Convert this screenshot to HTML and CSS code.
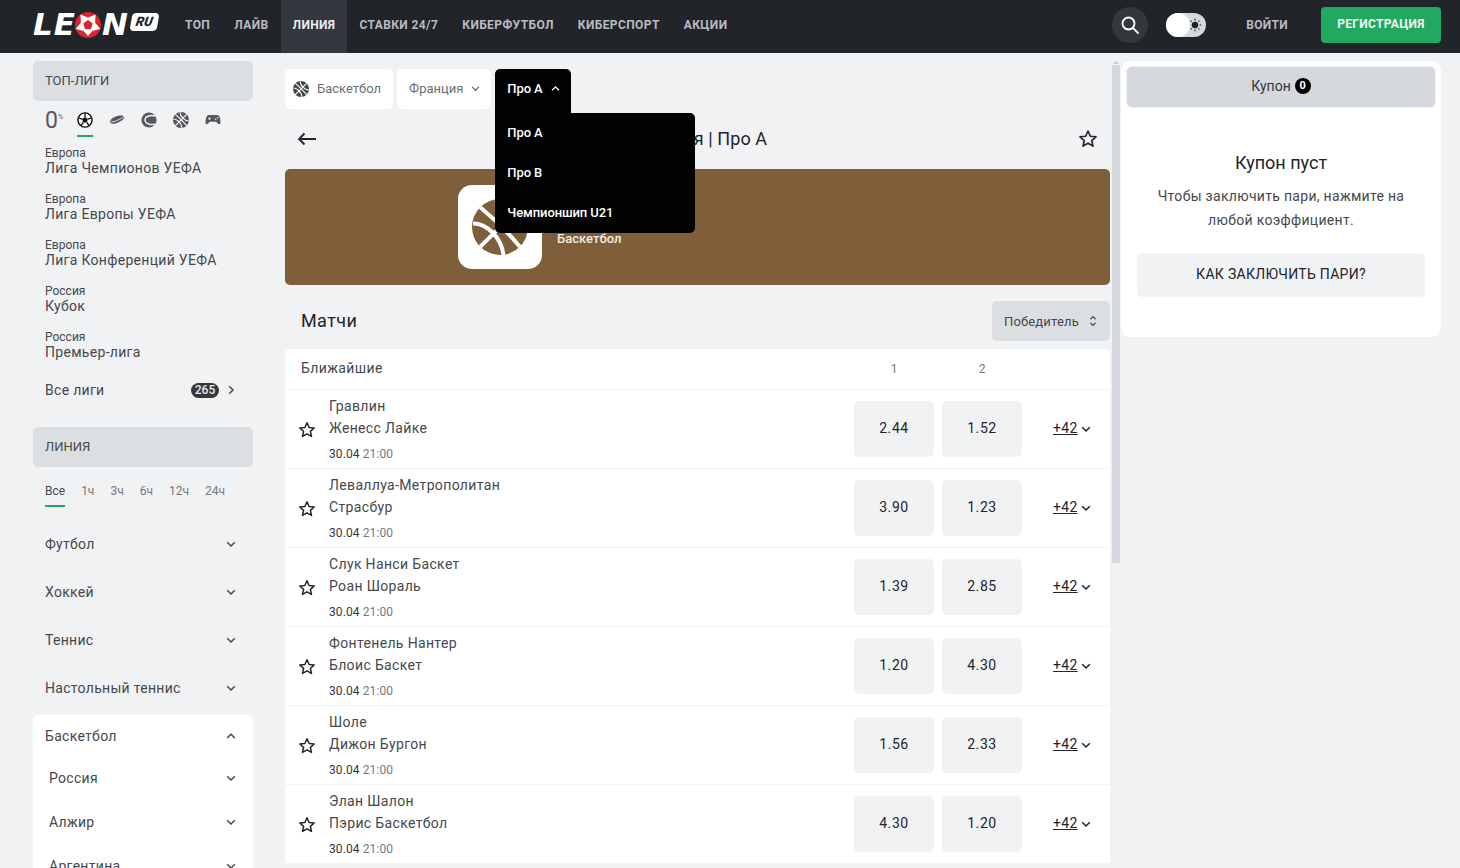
FILE: index.html
```html
<!DOCTYPE html>
<html lang="ru">
<head>
	<meta charset="UTF-8">
	<title>Леон - Франция | Про А</title>
	<link rel="stylesheet" href="styles.css">
</head>
<body>
	<svg class="defs" width="0" height="0">
		<symbol id="ball" viewBox="0 0 24 24">
			<circle cx="12" cy="12" r="12" fill="currentColor"/>
			<path d="M3.500 3.500C9 8 16 15 20.500 20.500M20.500 3.500L3.500 20.500M.5 10.500C6 10.500 12.500 16 13.500 24M10.500 .5C11 7 17 13 23.500 13.500" fill="none" stroke="#fff" stroke-width="1.700"/>
		</symbol>
		<symbol id="star" viewBox="0 0 18 18">
			<path d="M9 1.800l2.100 4.700 5.100.5-3.800 3.400 1.100 5-4.500-2.600-4.500 2.600 1.100-5L1.800 7l5.100-.5z" fill="none" stroke="currentColor" stroke-width="1.500" stroke-linejoin="round"/>
		</symbol>
		<symbol id="down" viewBox="0 0 10 10">
			<path d="M1.200 3.200L5 7l3.800-3.800" fill="none" stroke="currentColor" stroke-width="1.500"/>
		</symbol>
		<symbol id="up" viewBox="0 0 10 10">
			<path d="M1.200 7L5 3.200 8.800 7" fill="none" stroke="currentColor" stroke-width="1.500"/>
		</symbol>
	</svg>

	<header class="topbar">
		<div class="logo">
			<span class="logo_word">LE</span>
			<svg class="logo_ball" viewBox="0 0 26 26" width="26" height="26">
				<circle cx="13" cy="13" r="13" fill="#d9232e"/>
				<polygon points="13,5.500 20.600,2.500 20.100,10.700 25.400,17 17.400,19.100 13,24 8.600,19.100 .6,17 5.900,10.700 5.400,2.500" fill="#fff"/>
				<polygon points="13,8 17.800,11.500 15.900,17 10.100,17 8.200,11.500" fill="#d9232e"/>
			</svg>
			<span class="logo_word">N</span>
			<span class="logo_ru">RU</span>
		</div>
		<nav class="topnav">
			<a>ТОП</a>
			<a>ЛАЙВ</a>
			<a class="active">ЛИНИЯ</a>
			<a>СТАВКИ 24/7</a>
			<a>КИБЕРФУТБОЛ</a>
			<a>КИБЕРСПОРТ</a>
			<a>АКЦИИ</a>
		</nav>
		<div class="topright">
			<span class="searchbtn">
				<svg viewBox="0 0 20 20" width="20" height="20"><circle cx="8.500" cy="8.500" r="6" fill="none" stroke="#fff" stroke-width="1.800"/><path d="M13 13l5.500 5.500" stroke="#fff" stroke-width="1.800"/></svg>
			</span>
			<span class="toggle">
				<span class="toggle_knob"></span>
				<svg viewBox="0 0 14 14" width="14" height="14"><circle cx="7" cy="7" r="3.200" fill="#1d2025"/><path d="M7 .8v1.600M7 11.600v1.600M.8 7h1.600M11.600 7h1.600M2.600 2.600l1.100 1.100M10.300 10.300l1.100 1.100M2.600 11.400l1.100-1.100M10.300 3.700l1.100-1.100" stroke="#1d2025" stroke-width="1.100"/></svg>
			</span>
			<a class="loginbtn">ВОЙТИ</a>
			<a class="regbtn">РЕГИСТРАЦИЯ</a>
		</div>
	</header>

	<div class="layout">
		<aside class="side">
			<div class="side_head">ТОП-ЛИГИ</div>
			<div class="sporttabs">
				<span class="zero">0<small>%</small></span>
				<span class="sporttab active">
					<svg viewBox="0 0 18 18" width="16" height="16"><circle cx="9" cy="9" r="8" fill="#fff" stroke="#111" stroke-width="1.600"/><path d="M9 5.500l3.300 2.400-1.300 3.900H7L5.700 7.900z" fill="#111"/><path d="M9 1v4.500M12.300 7.900l4.200-1.400M11 11.800l2.600 3.600M7 11.800l-2.600 3.600M5.700 7.900L1.500 6.500" stroke="#111" stroke-width="1.500"/></svg>
				</span>
				<span class="sporttab">
					<svg viewBox="0 0 18 18" width="16" height="16"><path d="M1 10.500c0-2 5-5.500 10.500-6.500 3-.5 5.500.3 5.500 1.800 0 2.500-4.500 5.500-10 7-3.500.8-6 .2-6-2.300z" fill="#55585e"/><path d="M1.500 10c1.500 1.500 4 1 7-.2s6-2.800 8-4.800" fill="none" stroke="#f1f2f4" stroke-width="1"/></svg>
				</span>
				<span class="sporttab">
					<svg viewBox="0 0 18 18" width="16" height="16"><circle cx="9" cy="9" r="8.500" fill="#55585e"/><path d="M16 4.500C11 3 4.500 4.500 4.500 9s6.500 6 11.500 4.500" fill="none" stroke="#f1f2f4" stroke-width="1.500"/></svg>
				</span>
				<span class="sporttab ball_grey">
					<svg width="16" height="16"><use href="#ball"/></svg>
				</span>
				<span class="sporttab">
					<svg viewBox="0 0 18 18" width="16" height="16"><path d="M4.500 3.500h9c2 0 3 1.500 3.500 4.500l.5 3.500c.2 2-1.800 3-3 1.500L12.500 11h-7l-2 2c-1.200 1.500-3.200.5-3-1.500L1 8c.5-3 1.500-4.500 3.500-4.500z" fill="#55585e"/><path d="M3.500 7.500h3M5 6v3" stroke="#f1f2f4" stroke-width="1"/><circle cx="12" cy="8.200" r=".9" fill="#f1f2f4"/><circle cx="14.200" cy="6.500" r=".9" fill="#f1f2f4"/></svg>
				</span>
			</div>
			<ul class="leagues">
				<li><span>Европа</span>Лига Чемпионов УЕФА</li>
				<li><span>Европа</span>Лига Европы УЕФА</li>
				<li><span>Европа</span>Лига Конференций УЕФА</li>
				<li><span>Россия</span>Кубок</li>
				<li><span>Россия</span>Премьер-лига</li>
			</ul>
			<div class="allleagues">
				<span>Все лиги</span>
				<b class="badge">265</b>
				<svg class="chev_r" viewBox="0 0 10 10" width="10" height="10"><path d="M3.200 1.200L7 5 3.200 8.800" fill="none" stroke="currentColor" stroke-width="1.500"/></svg>
			</div>
			<div class="side_head line_head">ЛИНИЯ</div>
			<div class="timetabs">
				<span class="active">Все</span>
				<span>1ч</span>
				<span>3ч</span>
				<span>6ч</span>
				<span>12ч</span>
				<span>24ч</span>
			</div>
			<div class="sport"><span>Футбол</span><svg class="chev"><use href="#down"/></svg></div>
			<div class="sport"><span>Хоккей</span><svg class="chev"><use href="#down"/></svg></div>
			<div class="sport"><span>Теннис</span><svg class="chev"><use href="#down"/></svg></div>
			<div class="sport"><span>Настольный теннис</span><svg class="chev"><use href="#down"/></svg></div>
			<div class="sportcard">
				<div class="sport"><span>Баскетбол</span><svg class="chev"><use href="#up"/></svg></div>
				<div class="country"><span>Россия</span><svg class="chev"><use href="#down"/></svg></div>
				<div class="country"><span>Алжир</span><svg class="chev"><use href="#down"/></svg></div>
				<div class="country"><span>Аргентина</span><svg class="chev"><use href="#down"/></svg></div>
			</div>
		</aside>

		<main class="content">
			<div class="crumbs">
				<span class="crumb">
					<svg class="ball_dark" width="16" height="16"><use href="#ball"/></svg>
					Баскетбол
				</span>
				<span class="crumb crumb_drop">Франция <svg class="chev_s"><use href="#down"/></svg></span>
				<span class="crumb crumb_drop crumb_open">
					Про А <svg class="chev_s"><use href="#up"/></svg>
					<div class="menu">
						<a>Про А</a>
						<a>Про B</a>
						<a>Чемпионшип U21</a>
					</div>
				</span>
			</div>
			<div class="titlebar">
				<svg viewBox="0 0 20 14" width="20" height="14"><path d="M19 7H2M7.500 1.500L2 7l5.500 5.500" fill="none" stroke="#212429" stroke-width="1.800"/></svg>
				<h1>Франция | Про А</h1>
				<svg class="title_star" width="20" height="20"><use href="#star"/></svg>
			</div>
			<div class="banner">
				<span class="banner_icon"><svg class="ball_brown" width="56" height="56"><use href="#ball"/></svg></span>
				<span class="banner_sport">Баскетбол</span>
			</div>
			<div class="matchhead">
				<h2>Матчи</h2>
				<span class="market">
					Победитель
					<svg viewBox="0 0 10 16" width="10" height="14"><path d="M2 6l3-3 3 3M2 10l3 3 3-3" fill="none" stroke="#45484d" stroke-width="1.300"/></svg>
				</span>
			</div>
			<div class="matches">
				<div class="tablehead">
					<span class="tablehead_name">Ближайшие</span>
					<span class="tablehead_col">1</span>
					<span class="tablehead_col">2</span>
				</div>
				<div class="match">
					<svg class="match_star" width="18" height="18"><use href="#star"/></svg>
					<div class="teams"><p>Гравлин</p><p>Женесс Лайке</p><time>30.04 <i>21:00</i></time></div>
					<a class="odd">2.44</a><a class="odd">1.52</a>
					<a class="more"><u>+42</u><svg class="chev"><use href="#down"/></svg></a>
				</div>
				<div class="match">
					<svg class="match_star" width="18" height="18"><use href="#star"/></svg>
					<div class="teams"><p>Леваллуа-Метрополитан</p><p>Страсбур</p><time>30.04 <i>21:00</i></time></div>
					<a class="odd">3.90</a><a class="odd">1.23</a>
					<a class="more"><u>+42</u><svg class="chev"><use href="#down"/></svg></a>
				</div>
				<div class="match">
					<svg class="match_star" width="18" height="18"><use href="#star"/></svg>
					<div class="teams"><p>Слук Нанси Баскет</p><p>Роан Шораль</p><time>30.04 <i>21:00</i></time></div>
					<a class="odd">1.39</a><a class="odd">2.85</a>
					<a class="more"><u>+42</u><svg class="chev"><use href="#down"/></svg></a>
				</div>
				<div class="match">
					<svg class="match_star" width="18" height="18"><use href="#star"/></svg>
					<div class="teams"><p>Фонтенель Нантер</p><p>Блоис Баскет</p><time>30.04 <i>21:00</i></time></div>
					<a class="odd">1.20</a><a class="odd">4.30</a>
					<a class="more"><u>+42</u><svg class="chev"><use href="#down"/></svg></a>
				</div>
				<div class="match">
					<svg class="match_star" width="18" height="18"><use href="#star"/></svg>
					<div class="teams"><p>Шоле</p><p>Дижон Бургон</p><time>30.04 <i>21:00</i></time></div>
					<a class="odd">1.56</a><a class="odd">2.33</a>
					<a class="more"><u>+42</u><svg class="chev"><use href="#down"/></svg></a>
				</div>
				<div class="match">
					<svg class="match_star" width="18" height="18"><use href="#star"/></svg>
					<div class="teams"><p>Элан Шалон</p><p>Пэрис Баскетбол</p><time>30.04 <i>21:00</i></time></div>
					<a class="odd">4.30</a><a class="odd">1.20</a>
					<a class="more"><u>+42</u><svg class="chev"><use href="#down"/></svg></a>
				</div>
			</div>
		</main>

		<div class="scroll">
			<span class="scroll_arrow"></span>
			<span class="scroll_thumb"></span>
		</div>

		<aside class="coupon">
			<div class="coupon_tab">Купон <b>0</b></div>
			<div class="coupon_body">
				<h3>Купон пуст</h3>
				<p>Чтобы заключить пари, нажмите на любой коэффициент.</p>
				<a class="howto">КАК ЗАКЛЮЧИТЬ ПАРИ?</a>
			</div>
		</aside>
	</div>
</body>
</html>
```

FILE: styles.css
```css
* {
	box-sizing: border-box;
}
html, body {
	height: 100%;
}
body {
	margin: 0;
	overflow: hidden;
	background: #f1f2f4;
	color: #45484d;
	font-family: Roboto, "Liberation Sans", sans-serif;
	font-size: 14px;
}
p, h1, h2, h3, ul {
	margin: 0;
	padding: 0;
}
.defs {
	position: absolute;
}

/* top bar */
.topbar {
	display: flex;
	align-items: center;
	height: 53px;
	padding: 0 19px 0 33px;
	background: #212429;
}
.logo {
	display: flex;
	align-items: center;
	align-self: flex-start;
	width: 140px;
	height: 50px;
	color: #fff;
}
.logo_word {
	margin-bottom: 2px;
	font-family: "DejaVu Sans", sans-serif;
	font-size: 31px;
	font-weight: 700;
	font-style: italic;
	line-height: 28px;
	letter-spacing: 1px;
}
.logo_ball {
	margin: 0 1px 0 -1px;
	flex: none;
}
.logo_ru {
	align-self: flex-start;
	margin: 13px 0 0 2px;
	padding: 0 5px;
	height: 18px;
	border-radius: 4px;
	background: #fff;
	color: #212429;
	font-size: 13px;
	font-weight: 900;
	font-style: italic;
	line-height: 18px;
	transform: skewX(-10deg);
}
.topnav {
	display: flex;
	height: 53px;
}
.topnav a {
	padding: 0 12px;
	color: #b9bcc1;
	font-size: 12px;
	font-weight: 700;
	line-height: 51px;
	letter-spacing: .4px;
}
.topnav a.active {
	background: #33373e;
	color: #eceef0;
}
.topright {
	display: flex;
	align-items: center;
	margin-left: auto;
	padding-bottom: 3px;
}
.searchbtn {
	display: flex;
	align-items: center;
	justify-content: center;
	width: 36px;
	height: 36px;
	border-radius: 50%;
	background: #33373e;
}
.toggle {
	display: flex;
	align-items: center;
	justify-content: flex-end;
	position: relative;
	width: 40px;
	height: 24px;
	margin-left: 18px;
	padding-right: 4px;
	border-radius: 12px;
	background: #d5d8dc;
}
.toggle_knob {
	position: absolute;
	left: 0;
	top: 0;
	width: 24px;
	height: 24px;
	border-radius: 50%;
	background: #fff;
}
.loginbtn {
	margin-left: 40px;
	color: #b9bcc1;
	font-size: 12px;
	font-weight: 700;
	letter-spacing: .3px;
}
.regbtn {
	width: 120px;
	height: 36px;
	margin-left: 33px;
	border-radius: 4px;
	background: #21a861;
	color: #f3f5f4;
	font-size: 12px;
	font-weight: 700;
	line-height: 35px;
	text-align: center;
	letter-spacing: .3px;
}

/* columns */
.layout {
	display: flex;
	height: 815px;
	overflow: hidden;
	padding: 8px 19px 0 33px;
}
.side {
	flex: none;
	width: 220px;
}
.content {
	flex: none;
	width: 825px;
	margin-left: 32px;
}
.scroll {
	flex: none;
	width: 8px;
	margin-left: 2px;
}
.scroll_arrow {
	display: block;
	width: 0;
	margin: 0 auto 1px;
	border: 3px solid transparent;
	border-top: 0;
	border-bottom: 3px solid #c9ccd1;
}
.scroll_thumb {
	display: block;
	height: 498px;
	background: #d5d8dd;
}

/* left column */
.side_head {
	height: 40px;
	padding-left: 12px;
	border-radius: 5px;
	background: #dcdfe2;
	font-size: 13px;
	line-height: 39px;
}
.line_head {
	margin-top: 17px;
}
.sporttabs {
	display: flex;
	height: 31px;
	margin-top: 8px;
	padding-left: 12px;
}
.zero {
	width: 32px;
	color: #55585e;
	font-size: 23px;
	line-height: 24px;
}
.zero small {
	font-size: 7px;
	line-height: 0;
	vertical-align: 9px;
}
.sporttab {
	display: block;
	width: 16px;
	height: 25px;
	margin: 3px 16px 0 0;
	color: #55585e;
}
.sporttab svg {
	display: block;
}
.sporttab.active {
	border-bottom: 2px solid #21a861;
}
.ball_grey {
	color: #55585e;
}
.leagues {
	list-style: none;
	margin-top: 6px;
}
.leagues li {
	height: 46px;
	padding-left: 12px;
	font-size: 14px;
	line-height: 16px;
	letter-spacing: .3px;
}
.leagues span {
	display: block;
	font-size: 12px;
	line-height: 14px;
	letter-spacing: 0;
}
.allleagues {
	display: flex;
	align-items: center;
	height: 40px;
	margin-top: -6px;
	padding: 0 17px 0 12px;
	letter-spacing: .3px;
}
.allleagues span {
	flex: 1;
}
.badge {
	width: 28px;
	height: 15px;
	border-radius: 8px;
	background: #33373e;
	color: #e9eaec;
	font-size: 12px;
	font-weight: 500;
	line-height: 15px;
	text-align: center;
	letter-spacing: 0;
}
.chev_r {
	margin-left: 7px;
}
.timetabs {
	display: flex;
	height: 37px;
	margin-top: 16px;
	padding-left: 12px;
	color: #75787d;
	font-size: 12px;
	line-height: 16px;
}
.timetabs span {
	height: 24px;
	margin-right: 16px;
	border-bottom: 2px solid transparent;
}
.timetabs .active {
	color: #45484d;
	border-bottom-color: #21a861;
}
.sport, .country {
	display: flex;
	align-items: center;
	justify-content: space-between;
	height: 48px;
	padding: 0 17px 0 12px;
	letter-spacing: .3px;
}
.country {
	height: 44px;
	padding-left: 16px;
}
.chev {
	width: 10px;
	height: 10px;
	flex: none;
}
.sportcard {
	margin-top: 3px;
	border-radius: 5px 5px 0 0;
	background: #fff;
	padding-bottom: 20px;
}
.sportcard .sport {
	height: 41px;
}

/* breadcrumbs */
.crumbs {
	display: flex;
	gap: 4px;
	margin-top: 8px;
}
.crumb {
	display: flex;
	align-items: center;
	gap: 8px;
	position: relative;
	height: 40px;
	padding: 0 12px 1px;
	border-radius: 5px;
	background: #fff;
	color: #6b6e73;
	font-size: 13px;
	white-space: nowrap;
}
.crumb:first-child {
	padding: 0 12px 1px 8px;
}
.crumb_drop {
	padding-right: 11px;
}
.crumb_open {
	background: #020203;
	color: #fff;
	font-weight: 500;
	letter-spacing: -.1px;
	border-radius: 5px 5px 0 0;
}
.crumb_open::after {
	content: "";
	position: absolute;
	left: 0;
	right: 0;
	top: 40px;
	height: 4px;
	background: #020203;
}
.chev_s {
	width: 9px;
	height: 9px;
}
.ball_dark {
	color: #45484d;
}
.menu {
	position: absolute;
	left: 0;
	top: 44px;
	z-index: 5;
	width: 200px;
	border-radius: 0 5px 5px 5px;
	background: #020203;
}
.menu a {
	display: block;
	height: 40px;
	padding-left: 12px;
	font-size: 13px;
	font-weight: 500;
	line-height: 40px;
}

/* title and banner */
.titlebar {
	display: flex;
	align-items: center;
	justify-content: space-between;
	height: 60px;
	padding: 0 12px;
}
.titlebar h1 {
	margin-bottom: 2px;
	color: #212429;
	font-size: 18px;
	font-weight: 400;
	letter-spacing: .1px;
}
.title_star {
	color: #212429;
}
.banner {
	display: flex;
	align-items: center;
	height: 116px;
	padding-left: 173px;
	border-radius: 5px;
	background: #7f5f3a;
	color: #fff;
}
.banner_icon {
	display: flex;
	align-items: center;
	justify-content: center;
	width: 84px;
	height: 84px;
	border-radius: 14px;
	background: #fff;
}
.ball_brown {
	color: #7f5f3a;
}
.banner_sport {
	margin: 23px 0 0 15px;
	color: #f0ebe4;
	font-size: 13px;
	font-weight: 500;
}

/* matches */
.matchhead {
	display: flex;
	align-items: flex-end;
	justify-content: space-between;
	height: 64px;
	padding: 0 0 8px 16px;
}
.matchhead h2 {
	color: #212429;
	font-size: 18px;
	font-weight: 400;
	line-height: 40px;
	letter-spacing: .4px;
}
.market {
	display: flex;
	align-items: center;
	justify-content: space-between;
	width: 118px;
	height: 40px;
	padding: 0 12px;
	border-radius: 5px;
	background: #dcdfe2;
	font-size: 13px;
	letter-spacing: .15px;
}
.matches {
	display: flex;
	flex-direction: column;
	gap: 1px;
}
.tablehead {
	display: flex;
	align-items: center;
	height: 40px;
	padding-right: 88px;
	border-radius: 5px 5px 0 0;
	background: #fff;
}
.tablehead_name {
	flex: 1;
	padding: 0 0 2px 16px;
	letter-spacing: .4px;
}
.tablehead_col {
	width: 80px;
	margin-right: 8px;
	color: #75787d;
	font-size: 12px;
	text-align: center;
}
.tablehead_col:last-child {
	margin-right: 0;
}
.match {
	display: flex;
	align-items: center;
	flex: none;
	height: 78px;
	background: #fff;
}
.match_star {
	flex: none;
	margin: 2px 0 0 13px;
	color: #212429;
}
.teams {
	flex: 1;
	padding: 0 0 2px 13px;
	letter-spacing: .35px;
}
.teams p {
	line-height: 22px;
}
.teams time {
	display: block;
	margin-top: 7px;
	color: #33373e;
	font-size: 12px;
	line-height: 16px;
	letter-spacing: .1px;
}
.teams i {
	color: #75787d;
	font-style: normal;
}
.odd {
	width: 80px;
	height: 56px;
	margin-right: 8px;
	border-radius: 5px;
	background: #f1f2f4;
	color: #212429;
	line-height: 55px;
	text-align: center;
	letter-spacing: .6px;
}
.more {
	display: flex;
	align-items: center;
	gap: 3px;
	width: 80px;
	padding: 0 0 3px 23px;
	color: #212429;
	letter-spacing: .3px;
}
.more .chev {
	margin-top: 2px;
}

/* coupon */
.coupon {
	flex: none;
	width: 320px;
	height: 276px;
	margin-left: 1px;
	padding: 5px;
	border-radius: 10px;
	background: #fff;
}
.coupon_tab {
	display: flex;
	align-items: center;
	justify-content: center;
	gap: 4px;
	height: 42px;
	padding-bottom: 2px;
	border: 1px solid #eef0f2;
	border-radius: 6px;
	background: #d5d8dc;
	color: #33373e;
}
.coupon_tab b {
	width: 16px;
	height: 16px;
	border-radius: 50%;
	background: #020203;
	color: #fff;
	font-size: 11px;
	font-weight: 700;
	line-height: 16px;
	text-align: center;
}
.coupon_body {
	padding: 0 11px;
	text-align: center;
}
.coupon_body h3 {
	margin-top: 44px;
	color: #212429;
	font-size: 18px;
	font-weight: 400;
	line-height: 22px;
}
.coupon_body p {
	margin: 10px 10px 0;
	line-height: 24px;
	letter-spacing: .3px;
}
.howto {
	display: block;
	height: 44px;
	margin-top: 21px;
	border-radius: 5px;
	background: #f1f2f4;
	color: #212429;
	line-height: 43px;
	letter-spacing: .3px;
}
```
